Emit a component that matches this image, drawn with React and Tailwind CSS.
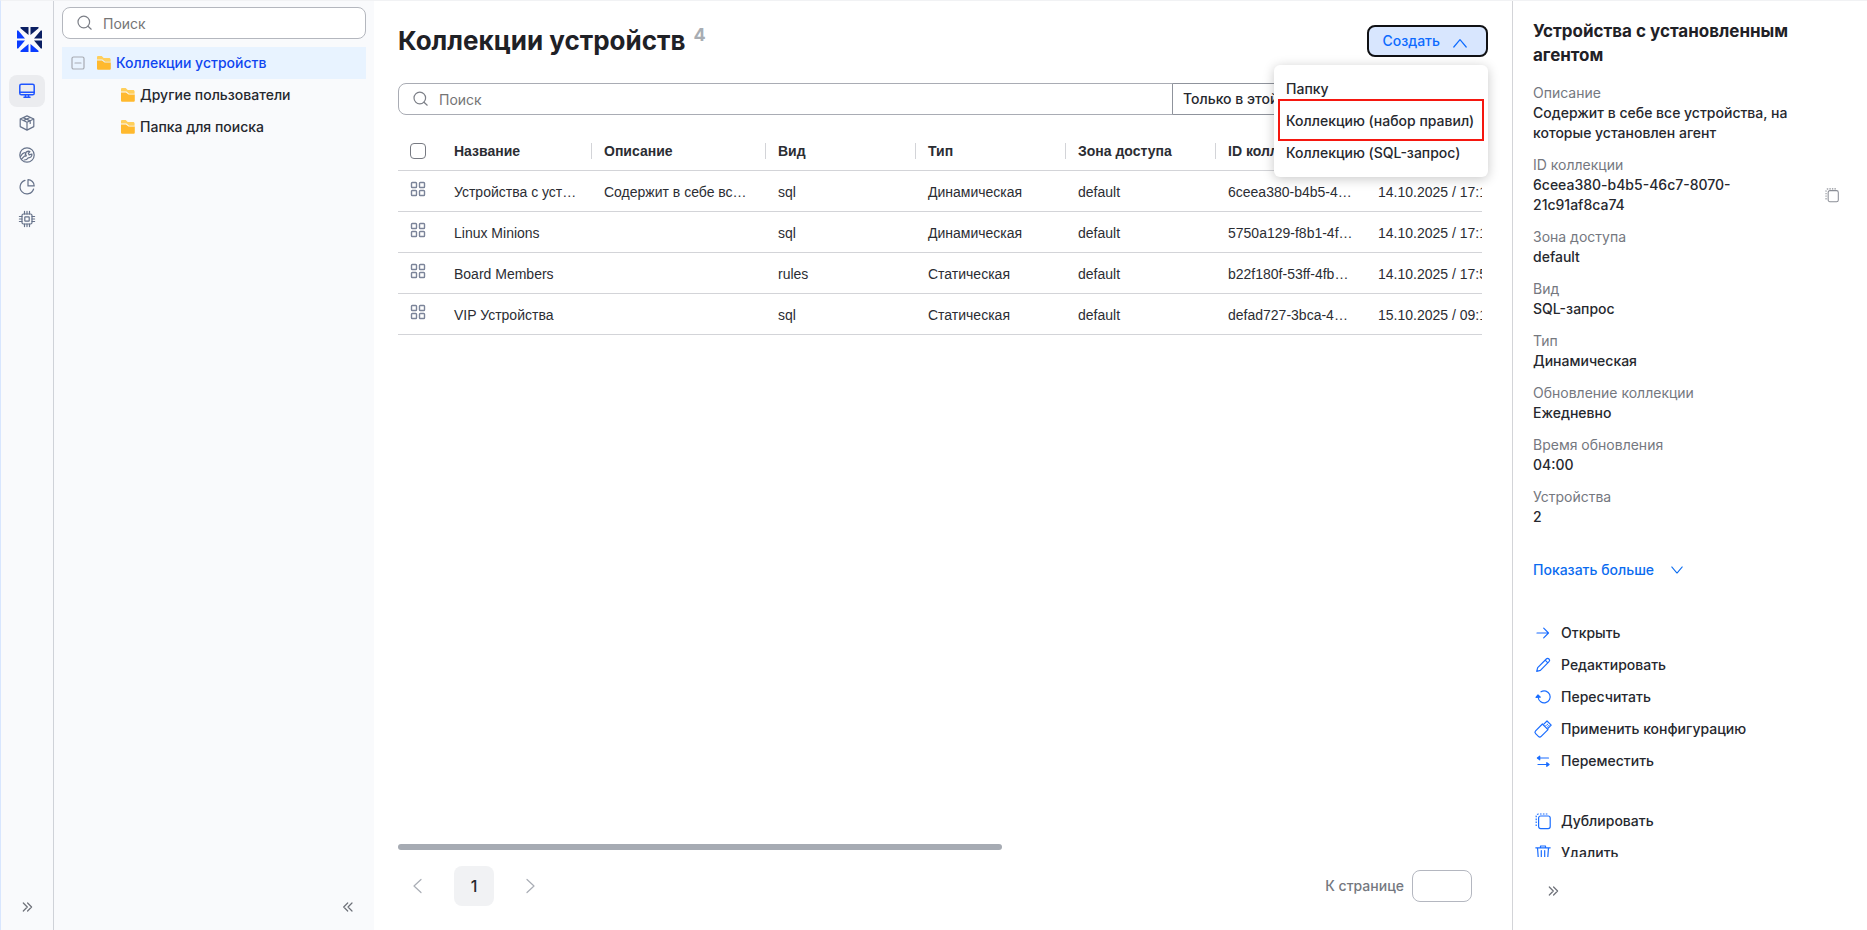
import { useState } from 'react';

const folders = ['Другие пользователи', 'Папка для поиска'];

const columns = ['Название', 'Описание', 'Вид', 'Тип', 'Зона доступа', 'ID коллекции', 'Дата создания', 'Дата изменения', 'Автор'];

const rows = [
  ['Устройства с установленным агентом', 'Содержит в себе все устройства, на которые установлен агент', 'sql', 'Динамическая', 'default', '6ceea380-b4b5-46c7-8070-21c91af8ca74', '14.10.2025 / 17:15'],
  ['Linux Minions', '', 'sql', 'Динамическая', 'default', '5750a129-f8b1-4fc2-9d10-7be1a0c35e12', '14.10.2025 / 17:18'],
  ['Board Members', '', 'rules', 'Статическая', 'default', 'b22f180f-53ff-4fbd-8a61-0cd9e7f4b321', '14.10.2025 / 17:52'],
  ['VIP Устройства', '', 'sql', 'Статическая', 'default', 'defad727-3bca-4e0f-b7d5-92c14a6e8f03', '15.10.2025 / 09:12'],
];

const details = [
  { label: 'Описание', value: 'Содержит в себе все устройства, на которые установлен агент' },
  { label: 'ID коллекции', value: '6ceea380-b4b5-46c7-8070-21c91af8ca74', copy: true },
  { label: 'Зона доступа', value: 'default' },
  { label: 'Вид', value: 'SQL-запрос' },
  { label: 'Тип', value: 'Динамическая' },
  { label: 'Обновление коллекции', value: 'Ежедневно' },
  { label: 'Время обновления', value: '04:00' },
  { label: 'Устройства', value: '2' },
];

const icons = {
  search: (
    <>
      <circle cx="6.8" cy="7" r="5.8" />
      <path d="M11 11.2 14.2 14.2" />
    </>
  ),
  monitor: (
    <>
      <rect x=".8" y="1.2" width="14.4" height="10.6" rx="1.6" />
      <path d="M.8 9.2h14.4M6.5 12v2M9.5 12v2M5 14.3h6" />
    </>
  ),
  box: (
    <path d="M8 .9 14.8 4v7.6L8 15.1 1.2 11.6V4L8 .9ZM1.2 4 8 7.3 14.8 4M8 7.3v7.8M4.3 2.6l6.9 3.3v2.6M11 2.5 4.4 5.6" />
  ),
  wrench: (
    <>
      <circle cx="8" cy="8" r="7.2" />
      <path d="m2.3 12.2 3.4-3.3c.5.3 1.2.4 1.5 0 .4-.6-.2-1.2-.9-1.3.2-2 1.5-3.3 3.4-3.4l1.2.3-1.6 1.8.9 1.6 2.7-.9c.3 2.3-1.4 4-3.7 3.8-.8 1.4-1.9 2.3-4 2.2" />
      <path d="M1.5 9.5c1-2 2.3-3.6 4.5-4" />
    </>
  ),
  pie: (
    <>
      <path d="M6 1.4A6.9 6.9 0 1 0 14.6 10" />
      <path d="M9 .7v6.2h6.2A6.2 6.2 0 0 0 9 .7Z" />
    </>
  ),
  chip: (
    <>
      <rect x="3" y="3" width="10" height="10" rx="1.5" />
      <rect x="5.8" y="5.8" width="4.4" height="4.4" rx=".5" />
      <path d="M5.5.4V3M8 .4V3M10.5.4V3M5.5 13v2.6M8 13v2.6M10.5 13v2.6M.4 5.5H3M.4 8H3M.4 10.5H3M13 5.5h2.6M13 8h2.6M13 10.5h2.6" />
    </>
  ),
  minus: (
    <>
      <rect x="2" y="2" width="12" height="12" rx="1.6" />
      <path d="M5 8h6" />
    </>
  ),
  grid: (
    <>
      <rect x="1.5" y="1.5" width="5" height="5" rx=".8" />
      <rect x="9.5" y="1.5" width="5" height="5" rx=".8" />
      <rect x="1.5" y="9.5" width="5" height="5" rx=".8" />
      <rect x="9.5" y="9.5" width="5" height="5" rx=".8" />
    </>
  ),
  up: <path d="m1.8 12 6.2-7.4L14.2 12" />,
  down: <path d="M2 4.5 8 11.5l6-7" />,
  left: <path d="M11 1.5 4 8l7 6.5" />,
  right: <path d="m5 1.5 7 6.5-7 6.5" />,
  more: <path d="m4.3 4 4 4-4 4M8.6 4l4 4-4 4" />,
  less: <path d="M12 4 8 8l4 4M7.7 4l-4 4 4 4" />,
  arrow: <path d="M2 8h11.3M8.7 3.2 13.5 8l-4.8 4.8" />,
  pencil: (
    <path d="M1.7 14.3 2.7 10.6 11.3 2a1.7 1.7 0 0 1 2.7 2.7L5.4 13.3l-3.7 1ZM10.2 3.2l2.6 2.6" />
  ),
  recount: (
    <>
      <path d="M3.2 8.5A6 6 0 1 0 6 2.8" />
      <path d="M1 8.3 3 6l2.3 2.1Z" fill="currentColor" />
    </>
  ),
  usb: (
    <>
      <path d="M.6 9.8 7.4 3l5.6 5.6-6.8 6.8a2 2 0 0 1-2.8 0L.6 12.6a2 2 0 0 1 0-2.8Z" />
      <path d="m8.8 3.2 3.2-3.2 4.2 4.2-3.2 3.2M11 4.5h.1M12.3 3.3h.1M12.7 5.8h.1M13.8 4.5h.1" />
    </>
  ),
  move: (
    <>
      <path d="M3 5h10.5M3 11.5h10" />
      <path d="M4.7 3.2 2.4 5l2.3 1.8ZM11.8 9.7l2.3 1.8-2.3 1.8Z" fill="currentColor" />
    </>
  ),
  copy: (
    <>
      <rect x="3.6" y="3" width="11.6" height="12.6" rx="2" />
      <path d="M1.2 13V3.2a2.2 2.2 0 0 1 2.2-2.2H13" strokeDasharray="1.6 1.3" strokeLinecap="butt" />
    </>
  ),
  trash: <path d="M.8 2.8h14.4M5.5 2.8V1h5v1.8M2.5 2.8l.9 12h9.2l.9-12M6.3 5.5v7M9.7 5.5v7" />,
};

function Icon({ name, className = 'size-4', stroke = 1.2 }) {
  return (
    <svg
      viewBox="0 0 16 16"
      className={`shrink-0 overflow-visible ${className}`}
      fill="none"
      stroke="currentColor"
      strokeWidth={stroke}
      strokeLinejoin="round"
      strokeLinecap="round"
      aria-hidden="true"
    >
      {icons[name]}
    </svg>
  );
}

function Logo() {
  return (
    <svg viewBox="0 0 25 25" className="size-[25px] shrink-0" aria-hidden="true">
      <g fill="#0b1f63">
        <path d="M3.5 0h8v8L3.5 1.2ZM21.5 0h-8v8l8-6.8Z" />
        <path d="M25 3.5v8h-8L23.8 3.5ZM25 21.5v-8h-8l6.8 8Z" />
      </g>
      <g fill="#0a3cff">
        <path d="M0 3.5v8h8L1.2 3.5ZM0 21.5v-8h8l-6.8 8Z" />
        <path d="M3.5 25h8v-8L3.5 23.8ZM21.5 25h-8v-8l8 6.8Z" />
      </g>
    </svg>
  );
}

function Folder() {
  return (
    <svg viewBox="0 0 16 16" className="size-4 shrink-0" aria-hidden="true">
      <path d="M1 2.2C1 1.5 1.5 1 2.2 1h3.5l2 2H13c1 0 1.6.6 1.6 1.5v2.3H9L6.5 4.6H1Z" fill="#ffcf5c" />
      <path d="M1 5.5h5l2.5 2h6.3v6c0 .8-.5 1.3-1.3 1.3h-11C1.6 14.8 1 14.3 1 13.5Z" fill="#ffb92e" />
    </svg>
  );
}

function Rail() {
  return (
    <nav className="flex w-[53px] shrink-0 flex-col items-center border-r border-[#cfd2d8] bg-[#f9fafc] pt-[26px] pb-[15px] text-[#66728a]">
      <div className="pl-1">
        <Logo />
      </div>
      <div className="mt-[23px] flex flex-col">
        {['monitor', 'box', 'wrench', 'pie', 'chip'].map((name) => (
          <button
            key={name}
            type="button"
            aria-label={name}
            className={`flex h-8 w-9 items-center justify-center rounded-lg ${name === 'monitor' ? 'bg-[#ebecef] text-[#1f55ff]' : ''}`}
          >
            <Icon name={name} stroke={name === 'monitor' ? 1.5 : 1.2} />
          </button>
        ))}
      </div>
      <button type="button" aria-label="Развернуть" className="mt-auto text-[#6d7078]">
        <Icon name="more" />
      </button>
    </nav>
  );
}

function Sidebar() {
  return (
    <aside className="flex w-80 shrink-0 flex-col bg-[#f9fafc] px-2 pt-1.5 pb-[15px]">
      <label className="flex h-8 items-center gap-2.5 rounded-lg border border-[#b4b7be] bg-white px-3.5 text-[#7c7f87]">
        <Icon name="search" />
        <input type="text" placeholder="Поиск" aria-label="Поиск по дереву" className="min-w-0 flex-1 pt-0.5 outline-none placeholder:text-[#757575]" />
      </label>
      <ul className="mt-2 font-medium text-[#26282e]">
        <li>
          <div className="flex h-8 items-center bg-[#e8f3ff] pl-2 text-[#0f45f0]">
            <button type="button" aria-label="Свернуть ветку" className="text-[#a7abb3]">
              <Icon name="minus" />
            </button>
            <span className="ml-2.5">
              <Folder />
            </span>
            <a href="#root" className="ml-1">Коллекции устройств</a>
          </div>
          <ul>
            {folders.map((name) => (
              <li key={name} className="flex h-8 items-center gap-1 pl-[58px]">
                <Folder />
                <a href="#root">{name}</a>
              </li>
            ))}
          </ul>
        </li>
      </ul>
      <button type="button" aria-label="Свернуть панель" className="mt-auto mr-2.5 self-end text-[#6d7078]">
        <Icon name="less" />
      </button>
    </aside>
  );
}

function CreateMenu() {
  const [open, setOpen] = useState(true);

  return (
    <div className="relative">
      <button
        type="button"
        aria-expanded={open}
        onClick={() => setOpen(!open)}
        className="flex h-8 items-center gap-3 rounded-lg border-2 border-[#101114] bg-[#d8e6fe] pr-[18px] pl-[13px] font-medium text-[#0d6bff]"
      >
        Создать
        <Icon name="up" className="mt-1 size-4" />
      </button>
      {open && (
        <ul className="absolute top-10 right-0 z-10 min-w-[214px] rounded-md bg-white py-2 font-medium whitespace-nowrap text-[#26282e] shadow-[0_2px_12px_rgba(0,0,0,0.22)]">
          <li>
            <button type="button" className="h-8 w-full px-3 text-left">Папку</button>
          </li>
          <li className="relative">
            <button type="button" className="h-8 w-full px-3 text-left">Коллекцию (набор правил)</button>
            <span className="pointer-events-none absolute inset-x-1 -top-1.5 -bottom-1 border-2 border-[#f5170f]" />
          </li>
          <li>
            <button type="button" className="h-8 w-full px-3 text-left">Коллекцию (SQL-запрос)</button>
          </li>
        </ul>
      )}
    </div>
  );
}

function CollectionsTable() {
  return (
    <div className="mr-1.5 min-h-0 flex-1 overflow-hidden">
      <table className="w-[1418px] table-fixed text-left font-['Liberation_Sans',Arial,sans-serif] text-[14px] leading-5 text-[#2b2d33]">
        <colgroup>
          <col className="w-11" />
          <col className="w-[150px]" />
          <col className="w-[174px]" />
          {columns.slice(2).map((name) => (
            <col key={name} className="w-[150px]" />
          ))}
        </colgroup>
        <thead>
          <tr className="h-[39px] border-b border-[#d3d4d8]">
            <th className="pt-0.5 pl-3">
              <input
                type="checkbox"
                aria-label="Выбрать все"
                className="block size-4 appearance-none rounded-sm border border-[#777a82] bg-white"
              />
            </th>
            {columns.map((name) => (
              <th key={name} className="p-0 pt-0.5">
                <div className="h-4 truncate border-r border-[#d3d4d8] pl-3 leading-4 font-bold">{name}</div>
              </th>
            ))}
          </tr>
        </thead>
        <tbody>
          {rows.map((row) => (
            <tr key={row[0]} className="h-[41px] border-b border-[#d3d4d8]">
              <td className="pb-1 pl-3 text-[#7b8499]">
                <Icon name="grid" stroke={1.4} />
              </td>
              {columns.map((name, index) => (
                <td key={name} className="truncate pt-0.5 pr-[13px] pl-3">
                  {row[index]}
                </td>
              ))}
            </tr>
          ))}
        </tbody>
      </table>
    </div>
  );
}

function Main() {
  return (
    <main className="flex min-w-0 flex-1 flex-col bg-white px-6 pt-6">
      <header className="flex items-start justify-between">
        <h1 className="flex items-start gap-2 text-[26px] leading-8 font-bold text-[#1f2126]">
          Коллекции устройств
          <sup className="top-0 text-[18px] leading-5 font-bold text-[#a8adb3]">4</sup>
        </h1>
        <CreateMenu />
      </header>
      <div className="mt-[26px] mr-1.5 flex h-8">
        <label className="flex min-w-0 flex-1 items-center gap-2.5 rounded-l-lg border border-[#a9acb4] px-3.5 text-[#7c7f87]">
          <Icon name="search" />
          <input type="text" placeholder="Поиск" aria-label="Поиск коллекций" className="min-w-0 flex-1 pt-0.5 outline-none placeholder:text-[#757575]" />
        </label>
        <select
          aria-label="Область поиска"
          className="-ml-px w-[310px] appearance-none rounded-r-lg border border-[#8f939c] bg-white px-2.5 font-medium text-[#26282e]"
        >
          <option>Только в этой папке</option>
        </select>
      </div>
      <div className="mt-4 flex min-h-0 flex-1 flex-col">
        <CollectionsTable />
        <div className="mr-1.5">
          <div className="h-1.5 w-[604px] max-w-full rounded-full bg-[#a6abb3]" />
        </div>
      </div>
      <footer className="flex items-center justify-between pt-4 pr-4 pb-6">
        <div className="flex items-center text-[#a9adb5]">
          <button type="button" aria-label="Предыдущая страница" className="flex h-10 w-10 items-center justify-center">
            <Icon name="left" />
          </button>
          <button type="button" className="mx-4 h-10 w-10 rounded-lg bg-[#f1f2f4] text-base font-medium text-[#26282e]">
            1
          </button>
          <button type="button" aria-label="Следующая страница" className="flex h-10 w-10 items-center justify-center">
            <Icon name="right" />
          </button>
        </div>
        <label className="flex items-center gap-2 font-medium text-[#757880]">
          К странице
          <input type="text" className="h-8 w-[60px] rounded-lg border border-[#b4b7c0] bg-white px-2 outline-none" />
        </label>
      </footer>
    </main>
  );
}

function Action({ icon, children }) {
  return (
    <li>
      <button type="button" className="flex h-8 items-center gap-2.5 pl-0.5 font-medium text-[#26282e]">
        <span className="text-[#1a6dff]">
          <Icon name={icon} />
        </span>
        {children}
      </button>
    </li>
  );
}

function DetailsPanel() {
  return (
    <aside className="flex w-[355px] shrink-0 flex-col border-l border-[#d3d4d8] bg-white">
      <div className="min-h-0 flex-1 overflow-hidden pt-[18px] pr-7 pl-5">
        <h2 className="text-[17px] leading-6 font-bold text-[#1f2126]">Устройства с установленным агентом</h2>
        <dl className="mt-4 flex flex-col gap-3">
          {details.map(({ label, value, copy }) => (
            <div key={label} className="flex items-center justify-between gap-20">
              <div>
                <dt className="text-[#75787f]">{label}</dt>
                <dd className="font-medium text-[#26282e]">{value}</dd>
              </div>
              {copy && (
                <button type="button" aria-label="Скопировать" className="mt-5 text-[#8b8e96]">
                  <Icon name="copy" className="size-3.5" />
                </button>
              )}
            </div>
          ))}
        </dl>
        <button type="button" className="mt-[33px] flex h-5 items-center gap-4 font-medium text-[#0b6cf0]">
          Показать больше
          <Icon name="down" className="size-3.5" />
        </button>
        <ul className="mt-[37px]">
          <Action icon="arrow">Открыть</Action>
          <Action icon="pencil">Редактировать</Action>
          <Action icon="recount">Пересчитать</Action>
          <Action icon="usb">Применить конфигурацию</Action>
          <Action icon="move">Переместить</Action>
        </ul>
        <ul className="mt-7">
          <Action icon="copy">Дублировать</Action>
          <Action icon="trash">Удалить</Action>
        </ul>
      </div>
      <div className="flex h-[73px] shrink-0 items-start pt-[26px] pl-8">
        <button type="button" aria-label="Скрыть панель" className="text-[#6d7078]">
          <Icon name="more" />
        </button>
      </div>
    </aside>
  );
}

export default function App() {
  return (
    <div className="flex h-screen overflow-hidden border-t border-l border-t-[#f1f2f4] border-l-[#d8e6fe] font-[Inter,'Noto_Sans',sans-serif] text-[14px] leading-5">
      <Rail />
      <Sidebar />
      <Main />
      <DetailsPanel />
    </div>
  );
}
